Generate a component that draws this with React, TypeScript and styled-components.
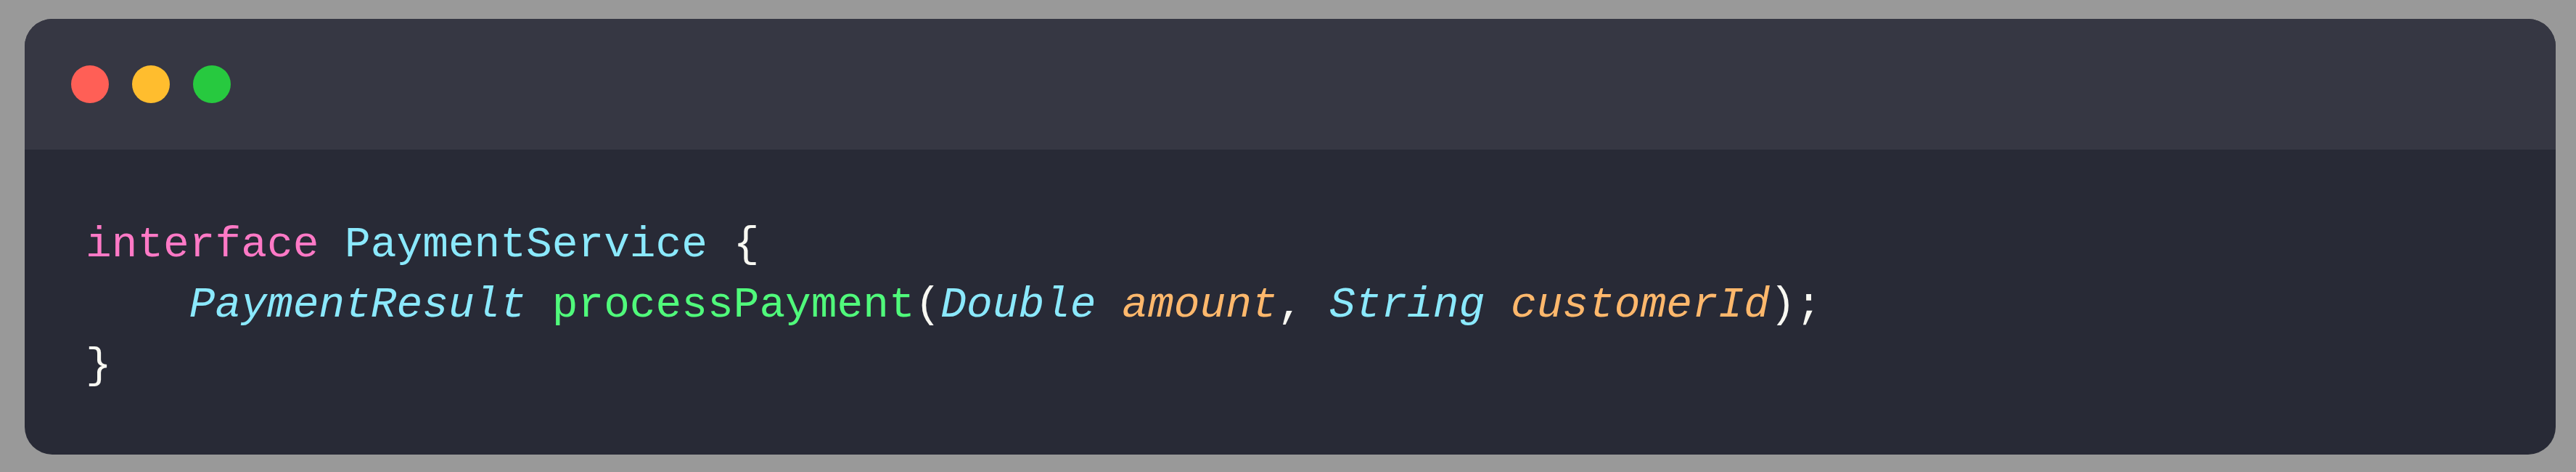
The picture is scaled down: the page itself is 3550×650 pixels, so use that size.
import React from "react";
import styled, { createGlobalStyle } from "styled-components";

const GlobalStyle = createGlobalStyle`
  html, body {
    margin: 0;
    padding: 0;
    background: #999999;
  }
  #root {
    padding: 26px 28px 24px 34px;
  }
`;

const Window = styled.div`
  width: 3488px;
  height: 600px;
  border-radius: 38px;
  overflow: hidden;
  background: #282a36;
  display: flex;
  flex-direction: column;
`;

const TitleBar = styled.div`
  height: 180px;
  flex: none;
  background: #363743;
  display: flex;
  align-items: center;
  gap: 32px;
  padding-left: 64px;
  box-sizing: border-box;
`;

const Dot = styled.span<{ $color: string }>`
  width: 52px;
  height: 52px;
  border-radius: 50%;
  background: ${(p) => p.$color};
`;

const Code = styled.pre`
  margin: 0;
  flex: 1;
  padding: 90px 84px 80px 84px;
  font-family: "Liberation Mono", "DejaVu Sans Mono", monospace;
  font-size: 59.5px;
  line-height: 83.3px;
  color: #f8f8f2;
  white-space: pre;
`;

const Tok = styled.span<{ $color: string; $italic?: boolean }>`
  color: ${(p) => p.$color};
  font-style: ${(p) => (p.$italic ? "italic" : "normal")};
`;

const PINK = "#ff79c6";
const CYAN = "#8be9fd";
const GREEN = "#50fa7b";
const ORANGE = "#ffb86c";
const WHITE = "#f8f8f2";

export default function App() {
  return (
    <>
      <GlobalStyle />
      <Window>
        <TitleBar>
          <Dot $color="#ff5f56" />
          <Dot $color="#ffbd2e" />
          <Dot $color="#27c93f" />
        </TitleBar>
        <Code>
          <Tok $color={PINK}>interface</Tok> <Tok $color={CYAN}>PaymentService</Tok>{" "}
          <Tok $color={WHITE}>{"{"}</Tok>
          {"\n    "}
          <Tok $color={CYAN} $italic>PaymentResult</Tok>{" "}
          <Tok $color={GREEN}>processPayment</Tok>
          <Tok $color={WHITE}>(</Tok>
          <Tok $color={CYAN} $italic>Double</Tok>{" "}
          <Tok $color={ORANGE} $italic>amount</Tok>
          <Tok $color={WHITE}>, </Tok>
          <Tok $color={CYAN} $italic>String</Tok>{" "}
          <Tok $color={ORANGE} $italic>customerId</Tok>
          <Tok $color={WHITE}>);</Tok>
          {"\n"}
          <Tok $color={WHITE}>{"}"}</Tok>
        </Code>
      </Window>
    </>
  );
}
